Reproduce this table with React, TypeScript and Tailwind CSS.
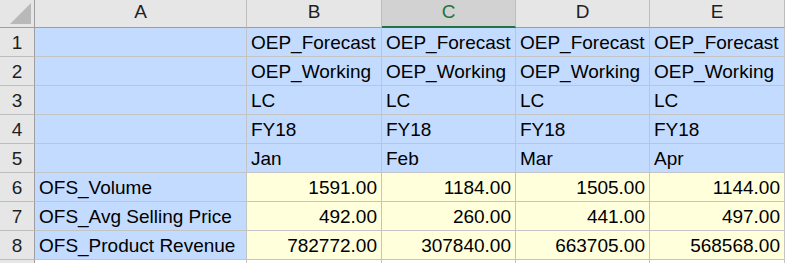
const cols = ["A", "B", "C", "D", "E"];

const headerRows = [
  ["OEP_Forecast", "OEP_Forecast", "OEP_Forecast", "OEP_Forecast"],
  ["OEP_Working", "OEP_Working", "OEP_Working", "OEP_Working"],
  ["LC", "LC", "LC", "LC"],
  ["FY18", "FY18", "FY18", "FY18"],
  ["Jan", "Feb", "Mar", "Apr"],
];

const dataRows: [string, string[]][] = [
  ["OFS_Volume", ["1591.00", "1184.00", "1505.00", "1144.00"]],
  ["OFS_Avg Selling Price", ["492.00", "260.00", "441.00", "497.00"]],
  ["OFS_Product Revenue", ["782772.00", "307840.00", "663705.00", "568568.00"]],
];

function RowNum({ n }: { n?: number }) {
  return (
    <div className="h-[29px] flex items-end justify-center pb-[2px] bg-[#e6e6e6] border-r border-b border-r-[#9e9e9e] border-b-[#bdbdbd] text-[#1f1f1f] leading-[22px]">
      {n}
    </div>
  );
}

function Cell({
  children,
  tone,
  right,
}: {
  children?: React.ReactNode;
  tone: "blue" | "yellow" | "white";
  right?: boolean;
}) {
  const bg =
    tone === "blue" ? "bg-[#c2dbff]" : tone === "yellow" ? "bg-[#ffffdc]" : "bg-white";
  return (
    <div
      className={`h-[29px] flex items-end pb-[2px] border-r border-b border-[#c4c4c4] leading-[22px] whitespace-nowrap overflow-hidden text-black ${bg} ${
        right ? "justify-end pr-[4px]" : "pl-[4px]"
      }`}
    >
      {children}
    </div>
  );
}

export default function App() {
  return (
    <div
      className="w-[785px] h-[263px] overflow-hidden bg-white text-[19px]"
      style={{ fontFamily: '"Liberation Sans", Arial, sans-serif' }}
    >
      <div className="grid grid-cols-[35px_212px_135px_134px_134px_135px]">
        {/* column headers */}
        <div className="h-[28px] relative bg-[#e6e6e6] border-r border-b border-[#9e9e9e]">
          <div className="absolute left-[10px] top-[3px] w-0 h-0 border-l-[21px] border-l-transparent border-b-[21px] border-b-[#b9b9b9]" />
        </div>
        {cols.map((c) =>
          c === "C" ? (
            <div
              key={c}
              className="h-[28px] flex items-end justify-center pb-[3px] leading-[22px] bg-[#d2d2d2] border-r border-r-[#bdbdbd] border-b-2 border-b-[#217346] text-[#217346]"
            >
              {c}
            </div>
          ) : (
            <div
              key={c}
              className="h-[28px] flex items-end justify-center pb-[4px] leading-[22px] bg-[#e6e6e6] border-r border-b border-r-[#bdbdbd] border-b-[#9e9e9e] text-[#1f1f1f]"
            >
              {c}
            </div>
          )
        )}

        {headerRows.map((row, i) => (
          <div key={i} className="contents">
            <RowNum n={i + 1} />
            <Cell tone="blue" />
            {row.map((v, j) => (
              <Cell key={j} tone="blue">
                {v}
              </Cell>
            ))}
          </div>
        ))}

        {dataRows.map(([label, vals], i) => (
          <div key={label} className="contents">
            <RowNum n={i + 6} />
            <Cell tone="blue">{label}</Cell>
            {vals.map((v, j) => (
              <Cell key={j} tone="yellow" right>
                {v}
              </Cell>
            ))}
          </div>
        ))}

        {/* row 9, only its top edge shows */}
        <RowNum />
        {cols.map((c) => (
          <Cell key={c} tone="white" />
        ))}
      </div>
    </div>
  );
}
